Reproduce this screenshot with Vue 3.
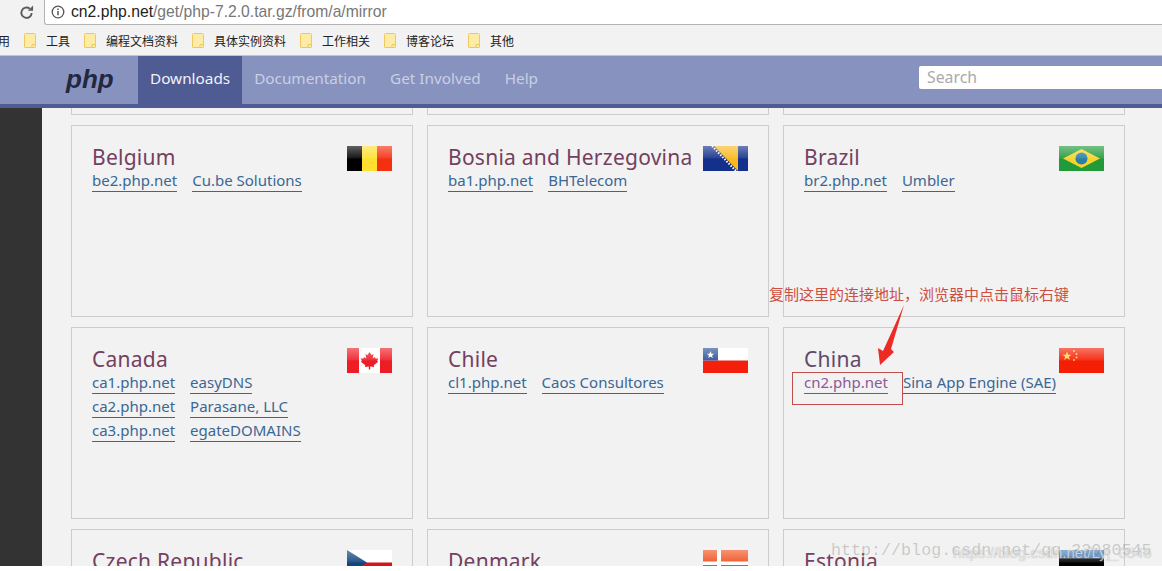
<script setup>
const bookmarks = ['工具', '编程文档资料', '具体实例资料', '工作相关', '博客论坛', '其他']

const navLinks = ['Downloads', 'Documentation', 'Get Involved', 'Help']

const countries = [
  { name: 'Belgium', flag: 'be', mirrors: [['be2.php.net', 'Cu.be Solutions']] },
  { name: 'Bosnia and Herzegovina', flag: 'ba', mirrors: [['ba1.php.net', 'BHTelecom']] },
  { name: 'Brazil', flag: 'br', mirrors: [['br2.php.net', 'Umbler']] },
  {
    name: 'Canada',
    flag: 'ca',
    mirrors: [
      ['ca1.php.net', 'easyDNS'],
      ['ca2.php.net', 'Parasane, LLC'],
      ['ca3.php.net', 'egateDOMAINS']
    ]
  },
  { name: 'Chile', flag: 'cl', mirrors: [['cl1.php.net', 'Caos Consultores']] },
  { name: 'China', flag: 'cn', mirrors: [['cn2.php.net', 'Sina App Engine (SAE)']], picked: true },
  { name: 'Czech Republic', flag: 'cz', mirrors: [] },
  { name: 'Denmark', flag: 'dk', mirrors: [] },
  { name: 'Estonia', flag: 'ee', mirrors: [] }
]
</script>

<template>
  <div class="page">
    <div class="address-row">
      <svg class="back" width="16" height="16" viewBox="0 0 16 16"><path d="M1 8h9M5 3.500 1 8l4 4.500" fill="none" stroke="#c4c4c4" stroke-width="2"/></svg>
      <svg class="reload" width="15" height="15" viewBox="0 0 16 16"><path d="M13.500 8.500A5.500 5.500 0 1 1 11.500 4" fill="none" stroke="#5a5a5a" stroke-width="2"/><path d="M9.500 6h5.500V.5z" fill="#5a5a5a"/></svg>
      <div class="url-box">
        <svg width="14" height="14" viewBox="0 0 14 14"><circle cx="7" cy="7" r="5.800" fill="none" stroke="#555" stroke-width="1.300"/><path d="M7 6v4.300M7 3.500v1.500" stroke="#555" stroke-width="1.500"/></svg>
        <span class="url"><b>cn2.php.net</b>/get/php-7.2.0.tar.gz/from/a/mirror</span>
      </div>
    </div>

    <div class="bookmarks">
      <span class="apps">用</span>
      <div v-for="b in bookmarks" :key="b" class="bookmark">
        <svg width="12" height="15" viewBox="0 0 12 15"><path d="M.5 1.500q0-1 1-1h9q1 0 1 1v12.500q0 .5-.5.500H1q-.5 0-.5-.5z" fill="#fdeca6" stroke="#f0c860"/><path d="M8 14.500v-3h3.500" fill="none" stroke="#f0c860"/></svg>
        <span>{{ b }}</span>
      </div>
    </div>

    <header class="nav">
      <span class="logo">php</span>
      <a v-for="(l, i) in navLinks" :key="l" class="nav-link" :class="{ active: i === 0 }">{{ l }}</a>
      <div class="search">Search</div>
    </header>

    <div class="body">
      <aside class="side"></aside>
      <main class="grid">
        <div class="stub"></div>
        <div class="stub"></div>
        <div class="stub"></div>
        <section v-for="c in countries" :key="c.name" class="card">
          <div class="card-head">
            <h3 :class="{ picked: c.picked }">{{ c.name }}</h3>
            <svg class="flag" viewBox="0 0 45 25" preserveAspectRatio="none">
              <defs>
                <linearGradient :id="'gloss-' + c.flag" x1="0" y1="0" x2="0" y2="1">
                  <stop offset="0" stop-color="#fff" stop-opacity=".38"/>
                  <stop offset="1" stop-color="#fff" stop-opacity=".08"/>
                </linearGradient>
              </defs>
              <g v-if="c.flag === 'be'">
                <rect width="15" height="25" fill="#000"/><rect x="15" width="15" height="25" fill="#ffe030"/><rect x="30" width="15" height="25" fill="#f53010"/>
              </g>
              <g v-else-if="c.flag === 'ba'">
                <rect width="45" height="25" fill="#13308a"/>
                <path d="M11 0h24v25z" fill="#fbb81e"/>
                <path d="M9 0l24 25" stroke="#fff" stroke-width="2" stroke-dasharray="1.500 1.500"/>
              </g>
              <g v-else-if="c.flag === 'br'">
                <rect width="45" height="25" fill="#229a3a"/>
                <path d="M22.500 3 41 12.500 22.500 22 4 12.500z" fill="#f6d32d"/>
                <circle cx="22.500" cy="12.500" r="6" fill="#2a7fa8"/>
              </g>
              <g v-else-if="c.flag === 'ca'">
                <rect width="45" height="25" fill="#fff"/>
                <rect width="12" height="25" fill="#ee1c25"/><rect x="33" width="12" height="25" fill="#ee1c25"/>
                <path d="M22.500 4l2 3 2-.8-.8 4.300 2.300-1.500.6 1.700 2.600-.4-1 2.700 1 .8-4.500 3.400.5 1.800-4-.5v3h-1.400v-3l-4 .5.5-1.800-4.500-3.400 1-.8-1-2.700 2.600.4.600-1.700 2.300 1.500-.8-4.300 2 .8z" fill="#ee1c25"/>
              </g>
              <g v-else-if="c.flag === 'cl'">
                <rect width="45" height="12.500" fill="#fff"/><rect y="12.500" width="45" height="12.500" fill="#f4200c"/>
                <rect width="15" height="12.500" fill="#2a4f9a"/>
                <path d="M7.500 3l1 2.700h2.800l-2.300 1.700.9 2.700-2.400-1.700-2.400 1.700.9-2.700-2.300-1.700h2.800z" fill="#fff"/>
              </g>
              <g v-else-if="c.flag === 'cn'">
                <rect width="45" height="25" fill="#f41e05"/>
                <path d="M8 3.500l1.200 3.300h3.400l-2.800 2 1.100 3.300L8 10l-2.900 2.100 1.100-3.300-2.800-2h3.400z" fill="#ffd84a"/>
                <circle cx="15" cy="3" r="1" fill="#ffc94a"/><circle cx="17.500" cy="6" r="1" fill="#ffc94a"/><circle cx="17.500" cy="9.500" r="1" fill="#ffc94a"/><circle cx="15" cy="12" r="1" fill="#ffc94a"/>
              </g>
              <g v-else-if="c.flag === 'cz'">
                <rect width="45" height="12.500" fill="#fff"/><rect y="12.500" width="45" height="12.500" fill="#d7141a"/>
                <path d="M0 0l20 12.500L0 25z" fill="#11457e"/>
              </g>
              <g v-else-if="c.flag === 'dk'">
                <rect width="45" height="25" fill="#f0501e"/>
                <rect x="14" width="4" height="25" fill="#fff"/><rect y="11.500" width="45" height="3.500" fill="#fff"/>
              </g>
              <g v-else-if="c.flag === 'ee'">
                <rect width="45" height="8.300" fill="#3f7fc4"/><rect y="8.300" width="45" height="8.400" fill="#000"/><rect y="16.700" width="45" height="8.300" fill="#fff"/>
              </g>
              <rect width="45" height="12.500" :fill="'url(#gloss-' + c.flag + ')'"/>
            </svg>
          </div>
          <div v-for="m in c.mirrors" :key="m[0]" class="mirror">
            <a class="host" :class="{ picked: c.picked }">{{ m[0] }}</a>
            <a class="provider">{{ m[1] }}</a>
          </div>
        </section>
      </main>
    </div>

    <div class="note">复制这里的连接地址，浏览器中点击鼠标右键</div>
    <div class="red-box"></div>
    <svg class="arrow" width="30" height="62" viewBox="0 0 30 62"><path d="M27 0 14 44 17 47 3 60 1 43 6 46z" fill="#ee2a24"/></svg>
    <div class="mark one">http://blog.csdn.net/qq_33080545</div>
    <div class="mark two">https://blog.csdn.net/Lyj_0545</div>
  </div>
</template>

<style>
html, body {
  margin: 0;
  overflow: hidden;
  background: #fff;
}
</style>

<style scoped>
.page {
  position: relative;
  width: 1162px;
  height: 566px;
  overflow: hidden;
  background: #f2f2f2;
  font-family: "Open Sans", "Noto Sans CJK SC", sans-serif;
}

.address-row {
  height: 25px;
  display: flex;
  align-items: center;
}

.back {
  margin-left: -11px;
}

.reload {
  margin-left: 14px;
  flex-shrink: 0;
}

.url-box {
  flex: 1;
  height: 25px;
  margin-left: 10px;
  display: flex;
  align-items: center;
  gap: 6px;
  padding-left: 6px;
  box-sizing: border-box;
  background: #fff;
  border-left: 1px solid #b4b4b4;
  border-bottom: 1px solid #b4b4b4;
  border-radius: 0 0 0 3px;
}

.url {
  font-family: "Liberation Sans", sans-serif;
  font-size: 15.7px;
  color: #777;
}

.url b {
  font-weight: 400;
  color: #222;
}

.bookmarks {
  height: 31px;
  display: flex;
  align-items: center;
  padding-top: 1px;
  box-sizing: border-box;
  font-size: 12px;
  color: #222;
  border-bottom: 1px solid #c4c4c4;
}

.apps {
  width: 26px;
  margin-left: -2px;
}

.bookmark {
  display: flex;
  align-items: center;
  gap: 10px;
  margin-right: 14px;
  white-space: nowrap;
}

.nav {
  height: 48px;
  display: flex;
  align-items: stretch;
  background: #8892bf;
  border-bottom: 4px solid #4f5b93;
  font-family: "Noto Sans", sans-serif;
}

.logo {
  width: 138px;
  padding-left: 66px;
  box-sizing: border-box;
  font: italic 700 26px/46px "Liberation Sans", sans-serif;
  color: #232840;
}

.nav-link {
  padding: 0 12px;
  font-size: 15.3px;
  line-height: 45px;
  color: #c9cfe4;
}

.nav-link.active {
  color: #f2f2f7;
  background: #4f5b93;
}

.search {
  margin: 10px 0 0 auto;
  width: 243px;
  height: 23px;
  padding-left: 8px;
  box-sizing: border-box;
  background: #fff;
  border-radius: 2px 0 0 2px;
  font: 15.8px/23px "Noto Sans", sans-serif;
  color: #aaa;
}

.body {
  display: flex;
}

.side {
  width: 42px;
  height: 458px;
  background: #333;
}

.grid {
  margin-left: 29px;
  display: grid;
  grid-template-columns: repeat(3, 342px);
  grid-template-rows: 7px 192px 192px 192px;
  column-gap: 14px;
  row-gap: 10px;
  font-family: "Noto Sans", sans-serif;
}

.stub {
  border: 1px solid #ccc;
  border-top: 0;
}

.card {
  box-sizing: border-box;
  padding: 20px 20px 0;
  border: 1px solid #ccc;
}

.card-head {
  display: flex;
  justify-content: space-between;
  height: 25px;
}

h3 {
  margin: -1px 0 0;
  font-size: 21px;
  font-weight: 400;
  line-height: 25px;
  letter-spacing: .25px;
  color: #74405f;
  white-space: nowrap;
}

h3.picked {
  color: #5f4a6a;
}

.flag {
  width: 45px;
  height: 25px;
}

.mirror {
  display: flex;
  height: 24px;
  align-items: flex-start;
}

.host, .provider {
  font-size: 15px;
  line-height: 19px;
  padding-bottom: 1px;
  color: #3a6794;
  border-bottom: 1px solid #3a6794;
  white-space: nowrap;
}

.provider {
  margin-left: 15px;
}

.host.picked {
  color: #8a5a96;
  border-bottom-color: #8a4f86;
}

.note {
  position: absolute;
  left: 769px;
  top: 285px;
  font-size: 15px;
  line-height: 18px;
  color: #cc4f42;
  white-space: nowrap;
}

.red-box {
  position: absolute;
  left: 792px;
  top: 372px;
  width: 111px;
  height: 33px;
  box-sizing: border-box;
  border: 1px solid #c0504d;
}

.arrow {
  position: absolute;
  left: 877px;
  top: 305px;
}

.mark {
  position: absolute;
  white-space: nowrap;
}

.mark.one {
  left: 831px;
  top: 541px;
  font: 16.7px/20px "Liberation Mono", monospace;
  color: rgba(90, 90, 90, .28);
}

.mark.two {
  left: 953px;
  top: 544px;
  font: 15px/18px "Liberation Sans", sans-serif;
  color: rgba(255, 255, 255, .6);
  text-shadow: 0 0 1px rgba(119, 119, 119, .6);
}
</style>
